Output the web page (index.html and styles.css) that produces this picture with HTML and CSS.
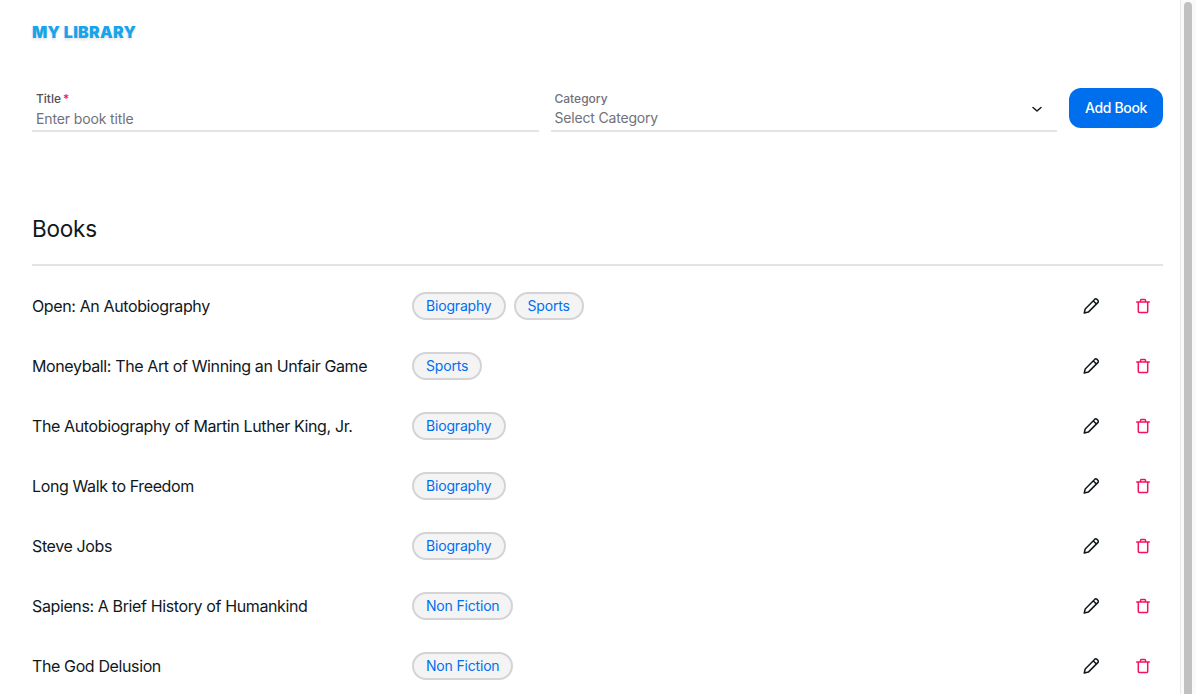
FILE: index.html
```html
<!DOCTYPE html>
<html lang="en">
<head>
<meta charset="utf-8">
<title>My Library</title>
<link rel="stylesheet" href="styles.css">
</head>
<body>
<div class="shell">
<main class="page">
  <h1 class="brand">MY LIBRARY</h1>
  <form class="add-form">
    <label class="field">
      <span class="field-label">Title<span class="req">*</span></span>
      <span class="field-value field-value-input">Enter book title</span>
    </label>
    <label class="field field-select">
      <span class="field-label field-label-muted">Category</span>
      <span class="field-value">Select Category</span>
      <svg class="chevron" viewBox="0 0 16 16" width="16" height="16" fill="none" stroke="currentColor" stroke-width="1.5" stroke-linecap="round" stroke-linejoin="round"><path d="M4 6.5l4 3.5 4-3.5"/></svg>
    </label>
    <button class="add-btn" type="button">Add Book</button>
  </form>
  <h2 class="section-title">Books</h2>
  <hr class="divider">
  <ul class="books">
    <li class="book"><span class="book-title">Open: An Autobiography</span><span class="chips"><span class="chip">Biography</span><span class="chip">Sports</span></span><span class="actions"><svg class="icon"><use href="#pencil"/></svg><svg class="icon icon-danger"><use href="#trash"/></svg></span></li>
    <li class="book"><span class="book-title">Moneyball: The Art of Winning an Unfair Game</span><span class="chips"><span class="chip">Sports</span></span><span class="actions"><svg class="icon"><use href="#pencil"/></svg><svg class="icon icon-danger"><use href="#trash"/></svg></span></li>
    <li class="book"><span class="book-title">The Autobiography of Martin Luther King, Jr.</span><span class="chips"><span class="chip">Biography</span></span><span class="actions"><svg class="icon"><use href="#pencil"/></svg><svg class="icon icon-danger"><use href="#trash"/></svg></span></li>
    <li class="book"><span class="book-title">Long Walk to Freedom</span><span class="chips"><span class="chip">Biography</span></span><span class="actions"><svg class="icon"><use href="#pencil"/></svg><svg class="icon icon-danger"><use href="#trash"/></svg></span></li>
    <li class="book"><span class="book-title">Steve Jobs</span><span class="chips"><span class="chip">Biography</span></span><span class="actions"><svg class="icon"><use href="#pencil"/></svg><svg class="icon icon-danger"><use href="#trash"/></svg></span></li>
    <li class="book"><span class="book-title">Sapiens: A Brief History of Humankind</span><span class="chips"><span class="chip">Non Fiction</span></span><span class="actions"><svg class="icon"><use href="#pencil"/></svg><svg class="icon icon-danger"><use href="#trash"/></svg></span></li>
    <li class="book"><span class="book-title">The God Delusion</span><span class="chips"><span class="chip">Non Fiction</span></span><span class="actions"><svg class="icon"><use href="#pencil"/></svg><svg class="icon icon-danger"><use href="#trash"/></svg></span></li>
  </ul>
</main>
<div class="scrollbar"><div class="thumb"></div></div>
</div>
<svg class="defs" width="0" height="0">
  <symbol id="pencil" viewBox="0 0 16 16"><path d="M11.6 1.4a1.7 1.7 0 0 1 2.4 0l.8.8a1.7 1.7 0 0 1 0 2.4L5.3 14.1l-4.1 1 1-4.1z M10.2 2.8l3.2 3.2" fill="none" stroke="currentColor" stroke-width="1.5" stroke-linejoin="round"/></symbol>
  <symbol id="trash" viewBox="0 0 16 16"><path d="M1.2 4h13.6 M3.3 4v9.5a1 1 0 0 0 1 1h7.4a1 1 0 0 0 1-1V4 M5.5 4V2.3a.8.8 0 0 1 .8-.8h3.4a.8.8 0 0 1 .8.8V4" fill="none" stroke="currentColor" stroke-width="1.5" stroke-linejoin="round"/></symbol>
</svg>
</body>
</html>
```
FILE: styles.css
```css
* { box-sizing: border-box; }
html, body { margin: 0; height: 100%; overflow: hidden; background: #fff; }
body { font-family: Inter, "Noto Sans", sans-serif; color: #11181c; }
.shell { display: flex; height: 694px; }
.page { flex: 1; min-width: 0; padding: 24px 17px 0 32px; overflow: hidden; }
.brand { margin: 0; font-size: 16px; line-height: 16px; font-weight: 900; letter-spacing: .3px; color: #17a4ea; text-shadow: 0 2px 3px rgba(0,0,0,.12); }
.add-form { display: flex; align-items: flex-end; gap: 12px; margin-top: 48px; }
.field { position: relative; flex: 1; display: flex; flex-direction: column; height: 44px; padding: 3px 4px 0; border-bottom: 2px solid #e4e4e7; }
.field-label { font-size: 12px; line-height: 16px; font-weight: 500; color: #52525b; }
.field-label-muted { color: #71717a; }
.req { color: #f31260; margin-left: 2px; }
.field-value { font-size: 14px; line-height: 20px; letter-spacing: -.18px; color: #71717a; margin-top: 1px; }
.field-value-input { margin-top: 2px; letter-spacing: -.13px; }
.chevron { position: absolute; right: 12px; top: 13px; color: #11181c; }
.add-btn { flex: none; width: 94px; height: 40px; margin-bottom: 4px; border: 0; border-radius: 12px; background: #006fee; color: #fff; font: 500 14px/20px Inter, sans-serif; letter-spacing: -.35px; }
.section-title { margin: 0; padding-top: 81px; font-size: 22.5px; line-height: 32px; font-weight: 400; letter-spacing: -.2px; }
.divider { margin: 19px 0 0; border: 0; height: 2px; background: #e4e4e7; }
.books { list-style: none; margin: 0; padding: 10px 0 0; }
.book { display: flex; align-items: center; height: 60px; font-size: 16px; }
.book-title { flex: none; width: 380px; line-height: 24px; letter-spacing: -.38px; }
.chips { flex: 1; display: flex; gap: 8px; }
.chip { height: 28px; padding: 0 12px; border: 2px solid #d4d4d8; border-radius: 14px; background: #f4f4f5; color: #006fee; font-size: 14px; line-height: 24px; letter-spacing: -.18px; }
.actions { display: flex; gap: 36px; padding-right: 12px; }
.icon { width: 16px; height: 16px; color: #11181c; display: block; }
.icon-danger { color: #f31260; }
.scrollbar { flex: none; width: 16px; background: #fafafa; border-left: 1px solid #e8e8e8; padding: 2px 4px 0 3px; }
.thumb { height: 100%; background: #c1c1c1; border-radius: 4px 4px 0 0; }
.defs { position: absolute; }
```
